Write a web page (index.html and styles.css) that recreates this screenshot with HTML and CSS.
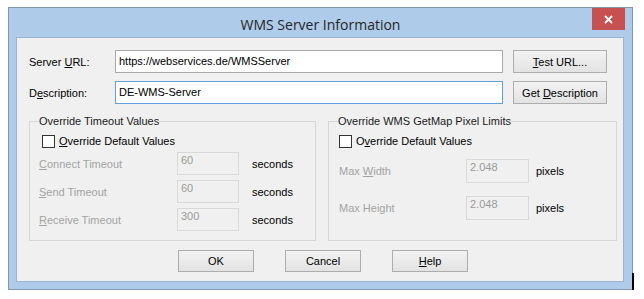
FILE: index.html
```html
<!DOCTYPE html>
<html lang="en">

<head>
    <meta charset="utf-8">
    <title>WMS Server Information</title>
    <link rel="stylesheet" href="styles.css">
</head>

<body>
    <div class="window">
        <div class="titlebar">
            <span></span>
            <span class="title">WMS Server Information</span>
            <span class="close">
                <svg width="9" height="9" viewBox="0 0 9 9">
                    <path d="M1 1 L8 8 M8 1 L1 8" stroke="#fff" stroke-width="1.8" fill="none"/>
                </svg>
            </span>
        </div>

        <div class="client">
            <div class="row">
                <span class="lbl">Server <u>U</u>RL:</span>
                <div class="field">https://webservices.de/WMSServer</div>
                <button class="btn side"><u>T</u>est URL...</button>
            </div>
            <div class="row second">
                <span class="lbl">D<u>e</u>scription:</span>
                <div class="field focus">DE-WMS-Server</div>
                <button class="btn side">Get <u>D</u>escription</button>
            </div>

            <div class="groups">
                <fieldset class="group timeout">
                    <legend>Override Timeout Values</legend>
                    <div class="check"><span class="box"></span><u>O</u>verride Default Values</div>
                    <div class="trow">
                        <span class="tlabel"><u>C</u>onnect Timeout</span>
                        <span class="dis">60</span>
                        <span class="unit">seconds</span>
                    </div>
                    <div class="trow">
                        <span class="tlabel"><u>S</u>end Timeout</span>
                        <span class="dis">60</span>
                        <span class="unit">seconds</span>
                    </div>
                    <div class="trow">
                        <span class="tlabel"><u>R</u>eceive Timeout</span>
                        <span class="dis">300</span>
                        <span class="unit">seconds</span>
                    </div>
                </fieldset>

                <fieldset class="group pixels">
                    <legend>Override WMS GetMap Pixel Limits</legend>
                    <div class="check"><span class="box"></span>O<u>v</u>erride Default Values</div>
                    <div class="prow">
                        <span class="tlabel">Max <u>W</u>idth</span>
                        <span class="dis">2.048</span>
                        <span class="unit">pixels</span>
                    </div>
                    <div class="prow">
                        <span class="tlabel">Max Height</span>
                        <span class="dis">2.048</span>
                        <span class="unit">pixels</span>
                    </div>
                </fieldset>
            </div>

            <div class="actions">
                <button class="btn act">OK</button>
                <button class="btn act">Cancel</button>
                <button class="btn act"><u>H</u>elp</button>
            </div>
        </div>
    </div>
</body>

</html>
```

FILE: styles.css
```css
body {
    background-color: white;
    margin: 0;
    padding: 0;
    font-family: 'Liberation Sans', Arial, sans-serif;
    font-size: 11px;
    color: black;
}

.window {
    position: relative;
    box-sizing: border-box;
    width: 625px;
    height: 283px;
    margin: 7px 0 0 8px;
    border: 1px solid #8196b0;
    background-color: #aecbe9;
    display: flex;
    flex-direction: column;
}

/* screenshot edge artifact */
.window::after {
    content: "";
    position: absolute;
    right: -2px;
    bottom: -1px;
    width: 2px;
    height: 17px;
    background-color: black;
}

.titlebar {
    height: 29px;
    display: grid;
    grid-template-columns: 1fr auto 1fr;
    align-items: start;
}

.title {
    font-family: 'Open Sans', sans-serif;
    font-size: 14px;
    color: #262626;
    line-height: 29px;
    padding-top: 2px;
}

.close {
    justify-self: end;
    margin-right: 7px;
    width: 33px;
    height: 22px;
    background-color: #c75050;
    display: flex;
    align-items: center;
    justify-content: center;
}

.close svg {
    display: block;
}

.client {
    flex: 1;
    margin: 0 8px 7px 7px;
    border: 1px solid #9db4cf;
    background-color: #f0f0f0;
    padding: 12px 6px 0 12px;
}

.row {
    display: flex;
    align-items: center;
    height: 23px;
}

.row.second {
    margin-top: 8px;
}

.lbl {
    width: 86px;
}

.field {
    box-sizing: border-box;
    width: 388px;
    height: 23px;
    border: 1px solid #a9a9a9;
    background-color: white;
    padding: 4px 3px 0;
    line-height: 13px;
}

.field.focus {
    border-color: #5fa1e0;
}

.btn {
    box-sizing: border-box;
    height: 23px;
    border: 1px solid #adadad;
    background: linear-gradient(#f2f2f2, #e3e3e3);
    font-family: 'Liberation Sans', Arial, sans-serif;
    font-size: 11px;
    color: black;
    padding: 0;
}

.side {
    width: 94px;
    margin-left: 10px;
}

.groups {
    display: flex;
    gap: 12px;
    margin-top: 10px;
}

.group {
    box-sizing: border-box;
    height: 127px;
    margin: 0;
    padding: 0 9px;
    border: 1px solid #d6d6d6;
}

.timeout {
    width: 288px;
}

.pixels {
    width: 290px;
}

legend {
    padding: 0;
    line-height: 14px;
    color: #1a1a1a;
}

.check {
    display: flex;
    align-items: center;
    height: 13px;
    margin-top: 7px;
    line-height: 13px;
}

.timeout .check {
    margin-left: 3px;
}

.pixels .check {
    margin-left: 1px;
}

.box {
    box-sizing: border-box;
    width: 13px;
    height: 13px;
    border: 1px solid #333;
    background-color: white;
    margin-right: 4px;
}

.trow,
.prow {
    display: flex;
    align-items: center;
}

.trow {
    margin-top: 4px;
}

.trow + .trow {
    margin-top: 5px;
}

.tlabel {
    color: #a3a3a3;
}

.trow .tlabel {
    width: 138px;
}

.prow .tlabel {
    width: 127px;
    margin-left: 1px;
}

.prow {
    margin-top: 11px;
}

.prow + .prow {
    margin-top: 13px;
}

.dis {
    box-sizing: border-box;
    height: 23px;
    width: 62px;
    border: 1px solid #d9d9d9;
    color: #9a9a9a;
    padding: 1px 3px 0;
    line-height: 13px;
    align-self: flex-start;
}

.prow .dis {
    width: 63px;
    height: 24px;
}

.trow .unit {
    margin-left: 13px;
}

.prow .unit {
    margin-left: 7px;
}

.actions {
    display: flex;
    gap: 31px;
    margin-top: 9px;
    padding-left: 149px;
}

.act {
    width: 76px;
    height: 22px;
}
```
